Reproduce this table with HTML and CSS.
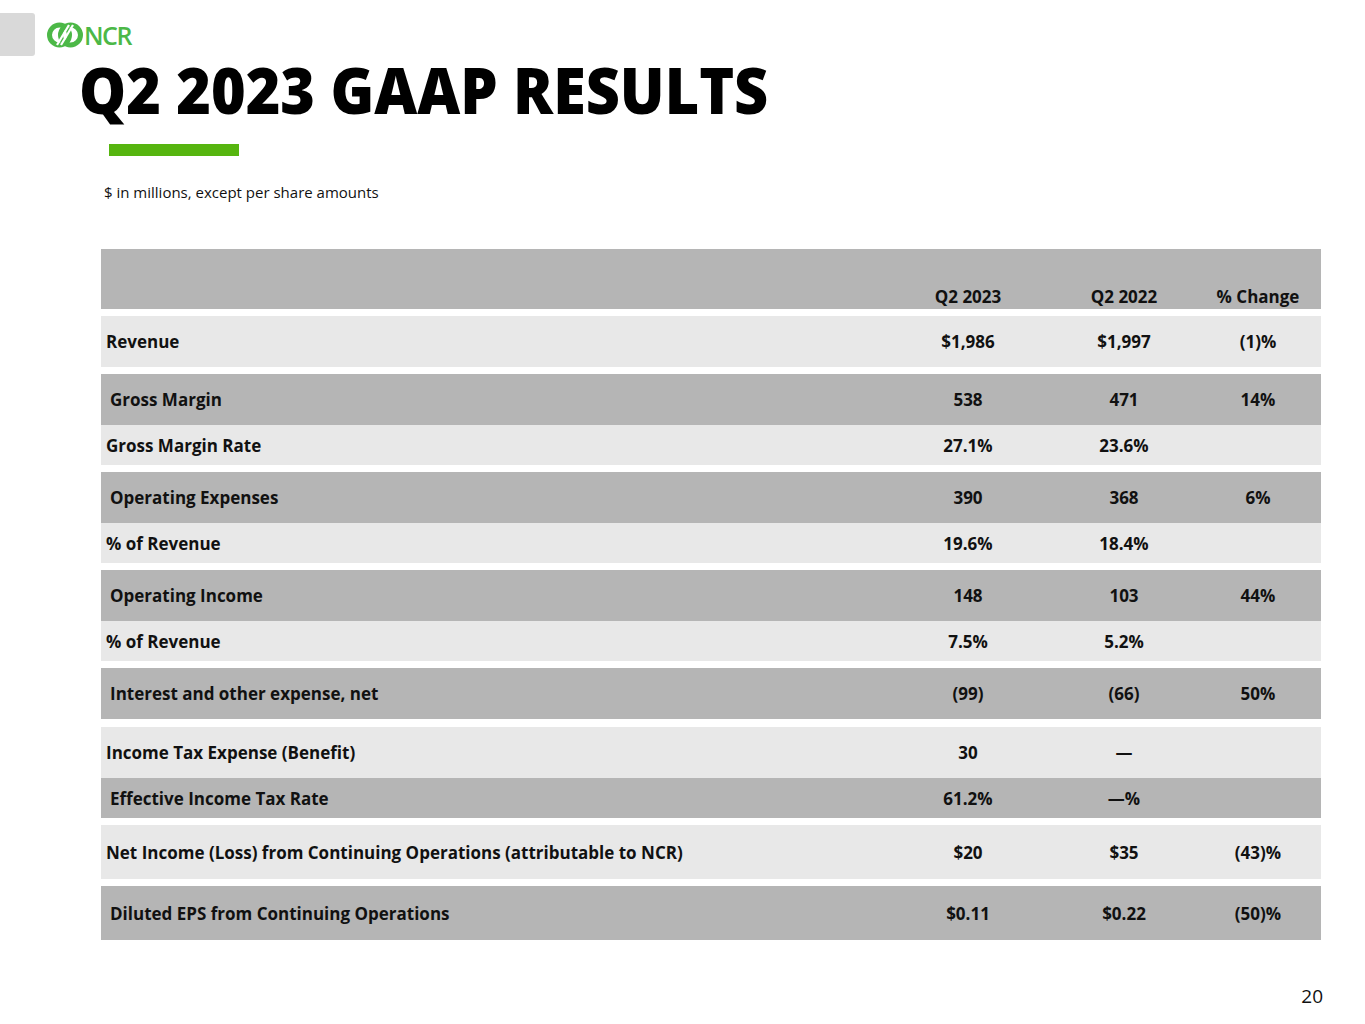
FILE: index.html
```html
<!DOCTYPE html>
<html>
<head>
<meta charset="utf-8">
<link rel="stylesheet" href="styles.css">
</head>
<body>
<div class="slide">
  <div class="topbar">
    <div class="tab"></div>
    <div class="logo">
      <svg class="logo-mark" viewBox="0 0 36 34" width="36" height="34">
        <g fill="none" stroke="#4cb847" stroke-width="5">
          <circle cx="12.5" cy="17" r="10"/>
          <circle cx="23.5" cy="17" r="10"/>
        </g>
        <g stroke="#ffffff" stroke-width="2.2">
          <line x1="10" y1="27" x2="22" y2="7"/>
          <line x1="14" y1="27" x2="26" y2="7"/>
        </g>
      </svg>
      <span class="logo-text">NCR</span>
    </div>
  </div>
  <h1 class="title">Q2 2023 GAAP RESULTS</h1>
  <div class="accent"></div>
  <p class="note">$ in millions, except per share amounts</p>

  <div class="table">
    <div class="row head dark">
      <div class="lbl"></div>
      <div class="c">Q2 2023</div>
      <div class="c">Q2 2022</div>
      <div class="c">% Change</div>
    </div>

    <div class="group">
      <div class="row tall light"><div class="lbl">Revenue</div><div class="c">$1,986</div><div class="c">$1,997</div><div class="c">(1)%</div></div>
    </div>

    <div class="group">
      <div class="row tall dark"><div class="lbl ind">Gross Margin</div><div class="c">538</div><div class="c">471</div><div class="c">14%</div></div>
      <div class="row short light"><div class="lbl">Gross Margin Rate</div><div class="c">27.1%</div><div class="c">23.6%</div><div class="c"></div></div>
    </div>

    <div class="group">
      <div class="row tall dark"><div class="lbl ind">Operating Expenses</div><div class="c">390</div><div class="c">368</div><div class="c">6%</div></div>
      <div class="row short light"><div class="lbl">% of Revenue</div><div class="c">19.6%</div><div class="c">18.4%</div><div class="c"></div></div>
    </div>

    <div class="group">
      <div class="row tall dark"><div class="lbl ind">Operating Income</div><div class="c">148</div><div class="c">103</div><div class="c">44%</div></div>
      <div class="row short light"><div class="lbl">% of Revenue</div><div class="c">7.5%</div><div class="c">5.2%</div><div class="c"></div></div>
    </div>

    <div class="group">
      <div class="row tall dark"><div class="lbl ind">Interest and other expense, net</div><div class="c">(99)</div><div class="c">(66)</div><div class="c">50%</div></div>
    </div>

    <div class="group gap8">
      <div class="row tall light"><div class="lbl">Income Tax Expense (Benefit)</div><div class="c">30</div><div class="c">—</div><div class="c"></div></div>
      <div class="row short dark"><div class="lbl ind">Effective Income Tax Rate</div><div class="c">61.2%</div><div class="c">—%</div><div class="c"></div></div>
    </div>

    <div class="group">
      <div class="row xtall light"><div class="lbl">Net Income (Loss) from Continuing Operations (attributable to NCR)</div><div class="c">$20</div><div class="c">$35</div><div class="c">(43)%</div></div>
    </div>

    <div class="group">
      <div class="row xtall dark"><div class="lbl ind">Diluted EPS from Continuing Operations</div><div class="c">$0.11</div><div class="c">$0.22</div><div class="c">(50)%</div></div>
    </div>
  </div>

  <div class="pagenum">20</div>
</div>
</body>
</html>
```

FILE: styles.css
```css
* { box-sizing: border-box; }
html, body {
  margin: 0;
  padding: 0;
  background: #ffffff;
}
body {
  font-family: "Open Sans", "Liberation Sans", sans-serif;
  color: #111111;
}
.slide {
  position: relative;
  width: 1365px;
  height: 1024px;
  overflow: hidden;
}
.topbar {
  display: flex;
  align-items: flex-start;
  padding-top: 13px;
  height: 56px;
}
.tab {
  width: 35px;
  height: 43px;
  background: #d9d9d9;
  border-radius: 0 3px 3px 0;
}
.logo {
  display: flex;
  align-items: center;
  margin-left: 12px;
  margin-top: 5px;
  height: 34px;
}
.logo-mark { display: block; }
.logo-text {
  font-family: "Open Sans", sans-serif;
  font-weight: 600;
  font-size: 25px;
  color: #4cb847;
  letter-spacing: -1.5px;
  margin-left: 1px;
  line-height: 20px;
}
.title {
  margin: 6px 0 0 79px;
  font-family: "Open Sans", sans-serif;
  font-weight: 800;
  font-size: 63px;
  line-height: 56px;
  letter-spacing: 0;
  color: #000000;
  transform: scaleX(0.94);
  transform-origin: left center;
  white-space: nowrap;
}
.accent {
  margin: 26px 0 0 109px;
  width: 130px;
  height: 12px;
  background: #56b50f;
}
.note {
  margin: 27px 0 0 104px;
  font-size: 15px;
  line-height: 18px;
  color: #111111;
}
.table {
  margin: 48px 0 0 101px;
  width: 1220px;
}
.row {
  display: grid;
  grid-template-columns: 790px 154px 158px 110px 1fr;
  align-items: center;
  font-weight: 700;
  font-size: 17px;
}
.row .c { text-align: center; }
.lbl { padding-left: 5px; white-space: nowrap; }
.lbl.ind { padding-left: 9px; }
.dark { background: #b5b5b5; }
.light { background: #e8e8e8; }
.head {
  height: 60px;
  align-items: end;
  padding-bottom: 1px;
}
.tall { height: 51px; }
.short { height: 40px; }
.xtall { height: 54px; }
.group { margin-top: 7px; }
.group.gap8 { margin-top: 8px; }
.table > .group:first-of-type { margin-top: 8px; }
.pagenum {
  position: absolute;
  right: 42px;
  top: 983px;
  font-size: 19px;
  color: #111111;
}
```
